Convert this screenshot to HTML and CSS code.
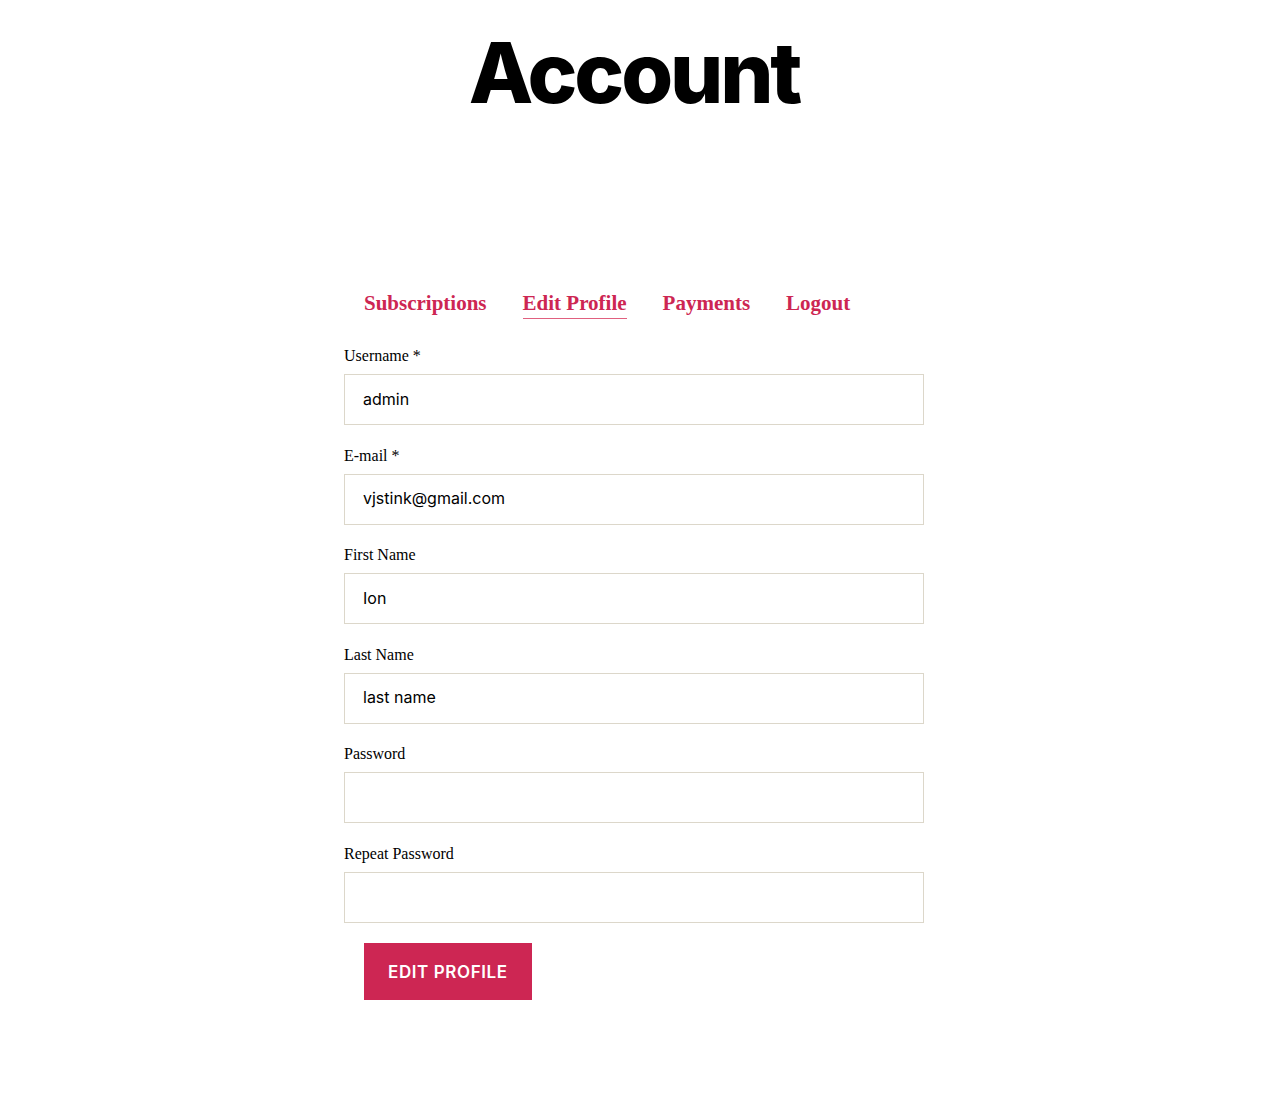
FILE: index.html
```html
<!DOCTYPE html>
<html lang="en">
<head>
<meta charset="utf-8">
<title>Account</title>
<link rel="stylesheet" href="styles.css">
</head>
<body>
<main class="page">
  <h1 class="title">Account</h1>
  <section class="account">
    <nav class="tabs">
      <a class="tab" href="#">Subscriptions</a>
      <a class="tab active" href="#">Edit Profile</a>
      <a class="tab" href="#">Payments</a>
      <a class="tab" href="#">Logout</a>
    </nav>
    <form class="form">
      <div class="field">
        <label class="label">Username *</label>
        <input class="input" type="text" value="admin">
      </div>
      <div class="field">
        <label class="label">E-mail *</label>
        <input class="input" type="text" value="vjstink@gmail.com">
      </div>
      <div class="field">
        <label class="label">First Name</label>
        <input class="input" type="text" value="Ion">
      </div>
      <div class="field">
        <label class="label">Last Name</label>
        <input class="input" type="text" value="last name">
      </div>
      <div class="field">
        <label class="label">Password</label>
        <input class="input" type="password" value="">
      </div>
      <div class="field">
        <label class="label">Repeat Password</label>
        <input class="input" type="password" value="">
      </div>
      <div class="actions">
        <button class="button" type="button">Edit Profile</button>
      </div>
    </form>
  </section>
</main>
</body>
</html>
```

FILE: styles.css
```css
* { box-sizing: border-box; }
html, body { margin: 0; padding: 0; background: #fff; }
body { font-family: "Liberation Serif", serif; color: #000; }

.page { padding-top: 31px; padding-bottom: 104px; }

.title {
  margin: 0;
  text-align: center;
  font-family: Inter, sans-serif;
  font-weight: 800;
  font-size: 84px;
  line-height: 1;
  letter-spacing: -0.038em;
  color: #000;
}

.account {
  width: 580px;
  margin: 0 auto;
  padding-top: 173px;
}

.tabs {
  display: flex;
  gap: 36px;
  padding-left: 20px;
  margin-bottom: 25px;
}

.tab {
  font-family: "Liberation Serif", serif;
  font-weight: 700;
  font-size: 21px;
  line-height: 30px;
  color: #cd2653;
  text-decoration: none;
  border-bottom: 1px solid transparent;
}
.tab.active { border-bottom-color: #e0607f; }

.form { display: flex; flex-direction: column; }

.field { margin-bottom: 18.6px; }

.label {
  display: block;
  font-size: 16px;
  line-height: 24px;
  margin-bottom: 6px;
}

.input {
  display: block;
  width: 100%;
  height: 51px;
  margin: 0;
  border: 1px solid #dcd7ca;
  border-radius: 0;
  padding: 0 18px 2px;
  font-family: Inter, sans-serif;
  font-size: 16px;
  color: #000;
  background: #fff;
  outline: none;
}

.actions { padding-left: 20px; margin-top: 1.4px; }

.button {
  display: inline-block;
  height: 57.5px;
  padding: 0 24px;
  border: 0;
  border-radius: 0;
  background: #cd2653;
  color: #fff;
  font-family: Inter, sans-serif;
  font-weight: 600;
  font-size: 17px;
  letter-spacing: 0.035em;
  text-transform: uppercase;
  cursor: pointer;
}
```
